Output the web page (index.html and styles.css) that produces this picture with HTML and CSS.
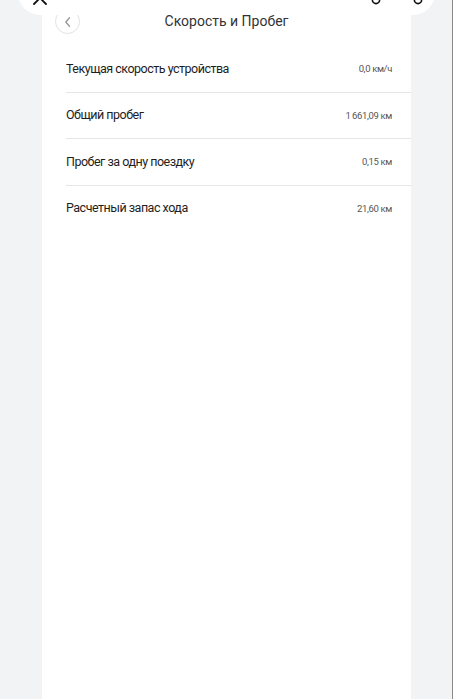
FILE: index.html
```html
<!DOCTYPE html>
<html lang="ru">
<head>
<meta charset="utf-8">
<title>Скорость и Пробег</title>
<link rel="stylesheet" href="styles.css">
</head>
<body>
<div class="frame">
  <div class="capsule">
    <svg class="cap-x" width="16" height="16" viewBox="0 0 16 16"><path d="M2 2 L14 14 M14 2 L2 14" stroke="#111" stroke-width="1.8" stroke-linecap="round" fill="none"/></svg>
    <div class="cap-right">
      <svg class="cap-o" width="10" height="10" viewBox="0 0 10 10"><circle cx="5" cy="5" r="3.6" stroke="#111" stroke-width="1.6" fill="none"/></svg>
      <svg class="cap-o" width="10" height="10" viewBox="0 0 10 10"><circle cx="5" cy="5" r="3.6" stroke="#111" stroke-width="1.6" fill="none"/></svg>
    </div>
  </div>
  <main class="card">
    <header class="header">
      <button class="back" aria-label="Назад">
        <svg width="10" height="12" viewBox="0 0 10 12"><path d="M6.5 1.8 L2.8 6 L6.5 10.2" stroke="#9a9a9a" stroke-width="1.4" fill="none" stroke-linecap="round" stroke-linejoin="round"/></svg>
      </button>
      <h1 class="title">Скорость и Пробег</h1>
    </header>
    <ul class="list">
      <li class="row"><span class="label">Текущая скорость устройства</span><span class="value">0,0 км/ч</span></li>
      <li class="row"><span class="label">Общий пробег</span><span class="value">1&#8201;661,09 км</span></li>
      <li class="row"><span class="label">Пробег за одну поездку</span><span class="value">0,15 км</span></li>
      <li class="row last"><span class="label">Расчетный запас хода</span><span class="value">21,60 км</span></li>
    </ul>
  </main>
</div>
</body>
</html>
```

FILE: styles.css
```css
html, body {
  margin: 0;
  padding: 0;
  height: 100%;
  overflow: hidden;
}
body {
  background: #f2f3f5;
  font-family: "Roboto", "Noto Sans", sans-serif;
  color: #222;
}
.frame {
  position: relative;
  width: 452px;
  height: 699px;
  border-right: 1px solid #8a8a8a;
  display: flex;
  justify-content: flex-start;
}
.capsule {
  position: absolute;
  left: 18px;
  top: -30px;
  width: 417px;
  height: 45px;
  background: #fff;
  border-radius: 22px;
  z-index: 2;
  box-sizing: border-box;
  padding: 0 12px 0 14px;
  display: flex;
  align-items: flex-end;
  justify-content: space-between;
}
.cap-x {
  margin-bottom: 9px;
}
.cap-right {
  display: flex;
  gap: 32px;
  margin-bottom: 10px;
}
.card {
  margin-left: 42px;
  width: 369px;
  height: 699px;
  background: #fff;
}
.header {
  position: relative;
  height: 42px;
  display: flex;
  align-items: center;
  justify-content: center;
}
.back {
  position: absolute;
  left: 13px;
  top: 9px;
  width: 25px;
  height: 25px;
  border-radius: 50%;
  border: 1px solid #e2e2e2;
  background: #fff;
  padding: 0;
  display: flex;
  align-items: center;
  justify-content: center;
}
.title {
  margin: 0;
  font-size: 14px;
  font-weight: 400;
  color: #333;
}
.list {
  list-style: none;
  margin: 0;
  padding: 4px 0 0 24px;
}
.row {
  height: 45.5px;
  border-bottom: 1px solid #e6e6e6;
  display: flex;
  align-items: center;
  justify-content: space-between;
  padding-right: 19px;
}
.row.last {
  border-bottom: none;
}
.label {
  font-size: 12.5px;
  letter-spacing: -0.5px;
  color: #1e1e1e;
  position: relative;
  top: -0.5px;
}
.value {
  font-size: 9.5px;
  color: #555;
  letter-spacing: -0.35px;
}
```
